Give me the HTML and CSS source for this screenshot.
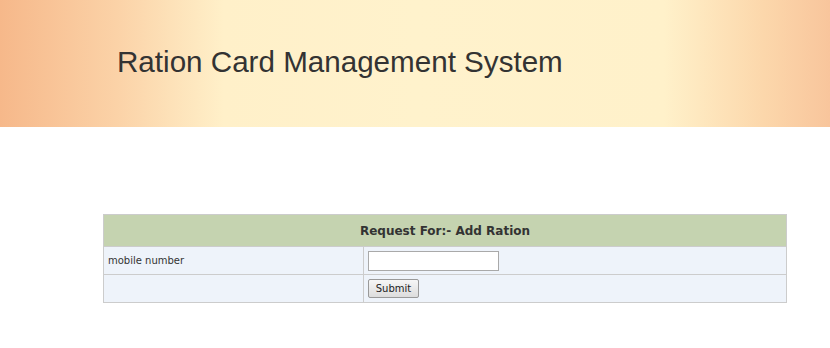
FILE: index.html
```html
<!DOCTYPE html>
<html>
<head>
<meta charset="utf-8">
<link rel="stylesheet" href="styles.css">
</head>
<body>
<div class="header">
  <h1 class="title">Ration Card Management System</h1>
</div>
<div class="content">
  <table class="form-table">
    <tr>
      <th colspan="2">Request For:- Add Ration</th>
    </tr>
    <tr>
      <td class="label">mobile number</td>
      <td><input type="text" class="field"></td>
    </tr>
    <tr>
      <td class="label"></td>
      <td><button class="btn">Submit</button></td>
    </tr>
  </table>
</div>
</body>
</html>
```
FILE: styles.css
```css
html, body {
  margin: 0;
  padding: 0;
  background: #ffffff;
}
.header {
  height: 127px;
  background: linear-gradient(to right, #f6b88a 0%, #fbd2a7 14%, #fff0c9 27%, #fff2cc 50%, #fff1ca 80%, #fcd7ab 92%, #f8c59c 100%);
  display: flex;
  align-items: flex-start;
}
.title {
  margin: 45px 0 0 117px;
  font-family: "Liberation Sans", Arial, sans-serif;
  font-weight: normal;
  font-size: 29.6px;
  line-height: 34px;
  color: #333333;
}
.content {
  padding: 87px 44px 0 103px;
}
.form-table {
  width: 684px;
  border-collapse: collapse;
  font-family: "DejaVu Sans", Verdana, sans-serif;
  color: #333333;
}
.form-table th {
  background: #c5d3b0;
  border: 1px solid #cccccc;
  height: 31px;
  font-size: 12px;
  font-weight: bold;
  color: #333333;
  text-align: center;
  padding: 0;
}
.form-table td {
  background: #eef3fa;
  border: 1px solid #cccccc;
  height: 27px;
  padding: 0 4px;
  font-size: 10px;
  vertical-align: middle;
}
.form-table td.label {
  width: 251px;
}
.field {
  box-sizing: border-box;
  width: 131px;
  height: 20px;
  margin: 0;
  border: 1px solid #a9a9a9;
  background: #fff;
  display: block;
}
.btn {
  box-sizing: border-box;
  height: 19px;
  width: 51px;
  margin: 0;
  padding: 0;
  font-family: "DejaVu Sans", Verdana, sans-serif;
  font-size: 10px;
  color: #222;
  border: 1px solid #999;
  border-radius: 2px;
  background: linear-gradient(#f6f6f6, #dddddd);
  display: block;
}
```
